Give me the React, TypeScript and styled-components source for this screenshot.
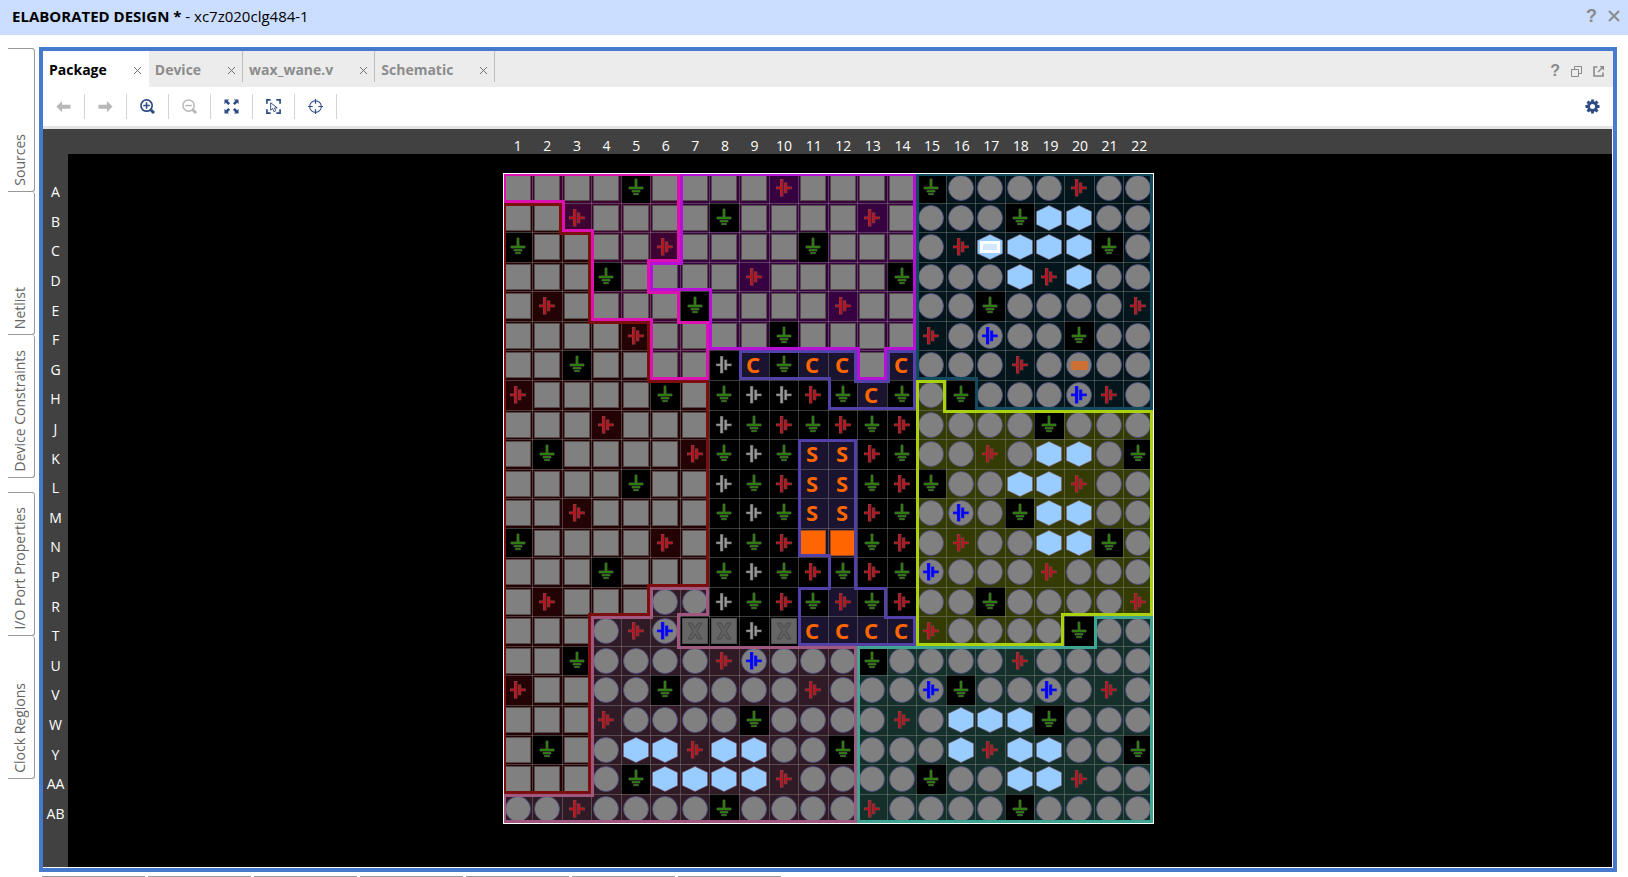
import React from 'react';
import styled, { createGlobalStyle } from 'styled-components';

const GlobalStyle = createGlobalStyle`
  * { box-sizing: border-box; }
  body {
    margin: 0;
    background: #fff;
    color: #000;
    font-family: "Open Sans", "Noto Sans", sans-serif;
    font-size: 14px;
  }
  button {
    margin: 0;
    padding: 0;
    border: 0;
    background: none;
    font: inherit;
    color: inherit;
    cursor: pointer;
  }
  svg { display: block; }
`;

/* ---------- pin map data ---------- */

const ROWS = ['A', 'B', 'C', 'D', 'E', 'F', 'G', 'H', 'J', 'K', 'L', 'M', 'N', 'P', 'R', 'T', 'U', 'V', 'W', 'Y', 'AA', 'AB'];
const COLS = Array.from({ length: 22 }, (_, i) => i + 1);

// I/O bank of every pin; K is a pin outside any bank
const BANKS = [
  'MMMMMMPPPPPPPPTTTTTTTT',
  'RRMMMMPPPPPPPPTTTTTTTT',
  'RRRMMMPPPPPPPPTTTTTTTT',
  'RRRMMPPPPPPPPPTTTTTTTT',
  'RRRMMMKPPPPPPPTTTTTTTT',
  'RRRRRMMPPPPPPPTTTTTTTT',
  'RRRRRMMKIIIIPITTTTTTTT',
  'RRRRRRRKKKKIIIOKTTTTTT',
  'RRRRRRRKKKKKKKOOOOOOOO',
  'RRRRRRRKKKIIKKOOOOOOOO',
  'RRRRRRRKKKIIKKOOOOOOOO',
  'RRRRRRRKKKIIKKOOOOOOOO',
  'RRRRRRRKKKIIKKOOOOOOOO',
  'RRRRRRRKKKKIKKOOOOOOOO',
  'RRRRRVVKKKIIIKOOOOOOOO',
  'RRRVVVKKKKIIIIOOOOOKGG',
  'RRRVVVVVVVVVGGGGGGGGGG',
  'RRRVVVVVVVVVGGGGGGGGGG',
  'RRRVVVVVVVVVGGGGGGGGGG',
  'RRRVVVVVVVVVGGGGGGGGGG',
  'RRRVVVVVVVVVGGGGGGGGGG',
  'VVVVVVVVVVVVGGGGGGGGGG',
];

// s square, c user pin, g ground, p power, w aux power, b bank power, h clock pin,
// H placed clock pin, r placed user pin, x unavailable, o dedicated pin, C config, S system monitor
const PINS = [
  'ssssgsssspssssgccccpcc',
  'sspssssgsssspscccghhcc',
  'gsssspssssgssscpHhhhgc',
  'sssgsssspssssgccchphcc',
  'spssssgsssspssccgccccp',
  'sssspssssgsssspcbccgcc',
  'ssgsssswCgCCsCcccpcrcc',
  'pssssgsgwwpgCgcgcccbpc',
  'ssspssswgpgpgpccccgccc',
  'sgsssspgwgSSpgccpchhcg',
  'ssssgsswgpSSgpgcchhpcc',
  'sspssssgwgSSpgcbcghhcc',
  'gsssspswgpoogpcpcchhgc',
  'sssgsssgwgpgpgbcccpccc',
  'spsssccwgpgpgpccgccccp',
  'ssscpbxxwxCCCCpccccgcc',
  'ssgccccpbcccgccccpcccc',
  'pssccgccccpcccbgccbcpc',
  'ssspccccgccccpchhhgccc',
  'sgschhphhccgccchphhccg',
  'ssscghhhhpccccgcchhpcc',
  'ccpccccgccccpccccgcccc',
];

const BANK_COLORS: Record<string, { fill: string; edge: string }> = {
  M: { fill: '#3f0333', edge: '#dc12b0' },
  P: { fill: '#36023f', edge: '#b80fd6' },
  R: { fill: '#230303', edge: '#7c0e0e' },
  T: { fill: '#04161b', edge: '#124a60' },
  O: { fill: '#353b05', edge: '#aad20f' },
  V: { fill: '#301a26', edge: '#a05880' },
  G: { fill: '#15302a', edge: '#3fa592' },
  I: { fill: '#1a1430', edge: '#5340a8' },
};

const SIZE = 651;
const EDGE = 3;
const PITCH = (SIZE - 1) / 22;
const colX = (k: number) => Math.floor(k * PITCH + 0.1);
const rowY = (k: number) => Math.floor(k * PITCH + 0.7);
const bank = (r: number, c: number) => (BANKS[r] && BANKS[r][c]) || '-';

/* ---------- pin symbols ---------- */

const Ground = () => (
  <path
    d="M-1-9h2v8h6v2H-7v-2h6zM-4 2.500h8v1.500h-8zM-2.500 5.500h5v1.200h-5z"
    fill="#2f7d0c"
    stroke="#4a5546"
    strokeWidth="0.900"
    paintOrder="stroke"
  />
);

const Power = ({ color, halo }: { color: string; halo: string }) => (
  <path
    d="M-7.500-1h4v-7.500h2.300v16.500h-2.300v-7.200h-4zM0.700-5h2v4h4.500v1.800h-4.500v4h-2z"
    fill={color}
    stroke={halo}
    strokeWidth="1.100"
    paintOrder="stroke"
  />
);

const Circle = () => <circle r="12.500" fill="#808080" stroke="#4a4a80" strokeWidth="0.800" />;
const Hexagon = () => <path d="M0-12.500L12.500-6.500V6.500L0 12.500L-12.500 6.500V-6.500z" fill="#99ccff" stroke="#80607c" strokeWidth="0.600" />;

const Letter = ({ children }: { children: string }) => (
  <text textAnchor="middle" x="-1" y="8" fontFamily='"Noto Sans", "Open Sans", sans-serif' fontSize="22" fontWeight="700" fill="#ff6600">
    {children}
  </text>
);

const Pin = ({ kind }: { kind: string }) => {
  switch (kind) {
    case 's':
      return <rect x="-12.500" y="-12.500" width="25" height="25" fill="#808080" stroke="#544848" strokeWidth="1" />;
    case 'c':
      return <Circle />;
    case 'g':
      return <Ground />;
    case 'p':
      return <Power color="#b8141e" halo="#804850" />;
    case 'w':
      return <Power color="#999" halo="#505050" />;
    case 'b':
      return (
        <>
          <Circle />
          <Power color="#0000ff" halo="#1515f0" />
        </>
      );
    case 'h':
      return <Hexagon />;
    case 'H':
      return (
        <>
          <Hexagon />
          <rect x="-8.500" y="-4.500" width="17" height="9" fill="#d3e8ff" stroke="#fff" strokeWidth="3" />
        </>
      );
    case 'r':
      return (
        <>
          <Circle />
          <rect x="-8" y="-4" width="17" height="9" fill="#cc7033" />
        </>
      );
    case 'x':
      return (
        <>
          <rect x="-12.500" y="-12.500" width="25" height="25" fill="#666" stroke="#505050" />
          <path d="M-7-8h4l3 5l3-5h4l-5 8l5 8h-4l-3-5l-3 5h-4l5-8z" fill="#606060" stroke="#4b4b4b" />
        </>
      );
    case 'o':
      return <rect x="-12.500" y="-12.500" width="25" height="25" fill="#ff6600" stroke="#a04818" />;
    default:
      return <Letter>{kind}</Letter>;
  }
};

const BankEdges = ({ r, c }: { r: number; c: number }) => {
  const own = bank(r, c);
  if (own === 'K') return null;
  const x0 = colX(c);
  const y0 = rowY(r);
  const x1 = colX(c + 1);
  const y1 = rowY(r + 1);
  const differs = (dr: number, dc: number) => bank(r + dr, c + dc) !== own;
  const up = differs(-1, 0);
  const down = differs(1, 0);
  const left = differs(0, -1);
  const right = differs(0, 1);
  let d = '';
  if (up) d += `M${x0} ${y0}H${x1}v${EDGE}H${x0}z`;
  if (down) d += `M${x0} ${y1 - EDGE}H${x1}v${EDGE}H${x0}z`;
  if (left) d += `M${x0} ${y0}h${EDGE}V${y1}h-${EDGE}z`;
  if (right) d += `M${x1 - EDGE} ${y0}h${EDGE}V${y1}h-${EDGE}z`;
  [-1, 1].forEach((dr) =>
    [-1, 1].forEach((dc) => {
      const straight = !(dr < 0 ? up : down) && !(dc < 0 ? left : right);
      if (straight && differs(dr, dc)) {
        d += `M${dc < 0 ? x0 : x1 - EDGE} ${dr < 0 ? y0 : y1 - EDGE}h${EDGE}v${EDGE}h-${EDGE}z`;
      }
    }),
  );
  return d ? <path d={d} fill={BANK_COLORS[own].edge} /> : null;
};

const PinMap = () => {
  const cells = ROWS.flatMap((_, r) => COLS.map((__, c) => ({ r, c, key: `${r}-${c}` })));
  return (
    <svg width={SIZE} height={SIZE} viewBox={`0 0 ${SIZE} ${SIZE}`} role="img" aria-label="Package pins">
      <g shapeRendering="crispEdges">
        {cells.map(({ r, c, key }) => {
          const own = bank(r, c);
          const fill = own === 'K' || PINS[r][c] === 'g' ? '#000' : BANK_COLORS[own].fill;
          return <rect key={key} x={colX(c)} y={rowY(r)} width={colX(c + 1) - colX(c)} height={rowY(r + 1) - rowY(r)} fill={fill} />;
        })}
        {COLS.slice(1).map((n) => (
          <path
            key={n}
            d={`M${colX(n - 1)} 0h1v${SIZE}h-1zM0 ${rowY(n - 1)}h${SIZE}v1H0z`}
            fill="#999"
            fillOpacity="0.38"
          />
        ))}
      </g>
      {cells.map(({ r, c, key }) => (
        <g key={key} transform={`translate(${colX(c) + 15} ${rowY(r) + 15})`}>
          <Pin kind={PINS[r][c]} />
        </g>
      ))}
      <g shapeRendering="crispEdges">
        {cells.map(({ r, c, key }) => (
          <BankEdges key={key} r={r} c={c} />
        ))}
        <path d={`M0 0h${SIZE}v${SIZE}H0zM1 1v${SIZE - 2}h${SIZE - 2}V1z`} fill="#fff" />
      </g>
    </svg>
  );
};

/* ---------- window chrome ---------- */

const Page = styled.div`
  min-height: 100vh;
  display: flex;
  flex-direction: column;
`;

const TitleBar = styled.header`
  height: 35px;
  padding: 0 8px 3px 12px;
  display: flex;
  align-items: center;
  justify-content: space-between;
  background: #ccdeff;
`;

const Title = styled.h1`
  margin: 0;
  font-size: 15px;
  line-height: 20px;
  font-weight: 400;
`;

const Actions = styled.div<{ $gap: number }>`
  display: flex;
  align-items: center;
  gap: ${(p) => p.$gap}px;
  color: #8a8a8a;
`;

const HelpButton = styled.button<{ $size: number }>`
  font-family: "Liberation Sans", sans-serif;
  font-size: ${(p) => p.$size}px;
  line-height: 20px;
  font-weight: 700;
`;

const Body = styled.div`
  flex: 1;
  display: flex;
  padding: 12px 11px 4px 0;
`;

const Rail = styled.nav`
  flex: none;
  width: 39px;
  padding: 1px 4px 0 8px;
  display: flex;
  flex-direction: column;
  gap: 14px;
`;

const RailGroup = styled.div`
  display: flex;
  flex-direction: column;
  border-top: 1px solid #999;
  border-radius: 0 3px 0 0;
`;

const RailTab = styled.button`
  height: 143px;
  padding: 5px 0;
  display: flex;
  align-items: flex-end;
  border: solid #999;
  border-width: 0 1px 1px 0;
  border-radius: 0 3px 3px 0;
  color: #666;
`;

const RailLabel = styled.span`
  width: 24px;
  line-height: 24px;
  font-size: 14px;
  white-space: nowrap;
  writing-mode: vertical-rl;
  transform: rotate(180deg);
`;

const Panel = styled.main`
  flex: 1;
  min-width: 0;
  display: flex;
  flex-direction: column;
  border: 4px solid #467acd;
`;

const TabBar = styled.div`
  height: 36px;
  display: flex;
  justify-content: space-between;
  background: #ececec;
`;

const TabList = styled.div`
  display: flex;
`;

const Tab = styled.div<{ $active?: boolean }>`
  height: ${(p) => (p.$active ? 36 : 31)}px;
  padding: ${(p) => (p.$active ? '0 7px 0 6px' : '0 6px')};
  display: flex;
  align-items: flex-start;
  gap: 26px;
  background: ${(p) => (p.$active ? '#fff' : 'transparent')};
  border-right: ${(p) => (p.$active ? '0' : '1px solid #bdbdbd')};
  color: ${(p) => (p.$active ? '#000' : '#8c8c8c')};
`;

const TabName = styled.button`
  font-size: 14px;
  line-height: 38px;
  font-weight: 700;
`;

const TabClose = styled.button`
  height: 38px;
  color: #707070;
`;

const PanelActions = styled(Actions)`
  padding: 4px 9px 0 0;
`;

const Toolbar = styled.div`
  height: 42px;
  display: flex;
  align-items: center;
  border-bottom: 3px solid #e4e4e4;
`;

const Tool = styled.button<{ $off?: boolean }>`
  width: 42px;
  height: 25px;
  display: flex;
  align-items: center;
  justify-content: center;
  border-right: 1px solid #d4d4d4;
  color: ${(p) => (p.$off ? '#b8b8b8' : '#2f4d85')};
`;

const Settings = styled.button`
  margin: 0 13px 0 auto;
  color: #2f4d85;
`;

const Viewer = styled.section`
  flex: 1;
  display: grid;
  grid-template: 25px 1fr / 25px 1fr;
  margin: 0 1px 1px 0;
  background: #414141;
  color: #fff;
`;

const ColumnRuler = styled.div`
  grid-column: 2;
  display: flex;
  justify-content: center;
  padding-right: 23px;
`;

const ColumnLabels = styled.div`
  width: 651px;
  display: grid;
  grid-template-columns: repeat(22, 1fr);
  line-height: 33px;
  text-align: center;
`;

const RowRuler = styled.div`
  padding-top: 23px;
`;

const RowLabels = styled.div`
  height: 651px;
  display: grid;
  grid-template-rows: repeat(22, 1fr);
  align-items: center;
  justify-items: center;
`;

const Stage = styled.div`
  display: flex;
  justify-content: center;
  padding: 19px 23px 19px 0;
  background: #000;
`;

const Dock = styled.footer`
  display: flex;
  gap: 3px;
  padding-left: 42px;
`;

const DockTab = styled.div`
  width: 103px;
  height: 1px;
  background: #999;
`;

/* ---------- icons ---------- */

const Icon = ({ size = 15, children }: { size?: number; children: React.ReactNode }) => (
  <svg width={size} height={size} viewBox="0 0 16 16" fill="none" stroke="currentColor" aria-hidden="true">
    {children}
  </svg>
);

const Cross = ({ size, weight }: { size: number; weight: number }) => (
  <svg width={size} height={size} viewBox={`0 0 ${size} ${size}`} stroke="currentColor" strokeWidth={weight} aria-hidden="true">
    <path d={`M1 1L${size - 1} ${size - 1}M${size - 1} 1L1 ${size - 1}`} />
  </svg>
);

const ArrowLeft = <path d="M0.500 8L6.500 2v4H15.500v4.500H6.500V14z" fill="currentColor" stroke="none" />;
const ArrowRight = <path d="M15.500 8L9.500 2v4H0.500v4.500H9.500V14z" fill="currentColor" stroke="none" />;
const ZoomIn = (
  <>
    <circle cx="7" cy="7" r="6" strokeWidth="1.800" />
    <path d="M3.500 7h7M7 3.500v7" strokeWidth="1.600" />
    <path d="M11.500 11.500l3.500 3.500" strokeWidth="3.200" />
  </>
);
const ZoomOut = (
  <>
    <circle cx="7" cy="7" r="6" strokeWidth="1.600" />
    <path d="M3.500 7h7" strokeWidth="1.600" />
    <path d="M11.500 11.500l3.500 3.500" strokeWidth="3" />
  </>
);
const Fit = (
  <path
    d="M0.500 0.500h5l-1.500 1.500l2.500 2.500l-2 2l-2.500-2.500l-1.500 1.500zM15.500 0.500v5l-1.500-1.500l-2.500 2.500l-2-2l2.500-2.500l-1.500-1.500zM0.500 15.500v-5l1.500 1.500l2.500-2.500l2 2l-2.500 2.500l1.500 1.500zM15.500 15.500h-5l1.500-1.500l-2.500-2.500l2-2l2.500 2.500l1.500-1.500z"
    fill="currentColor"
    stroke="none"
  />
);
const SelectArea = (
  <>
    <path d="M1 5V1h4M11 1h4v4M15 11v4h-4M5 15H1v-4" strokeWidth="1.800" />
    <path d="M5 4v8l2-2l1.500 3.500l2-1l-1.500-3h3z" strokeWidth="1" />
  </>
);
const Target = (
  <>
    <circle cx="8" cy="8" r="6.200" strokeWidth="1.100" />
    <path d="M8 0v5M8 11v5M0 8h5M11 8h5" strokeWidth="1.300" />
  </>
);
const Gear = (
  <path
    fill="currentColor"
    stroke="none"
    fillRule="evenodd"
    d="M6.500 0.500h3v2l1.200.5l1.600-1.400l2.100 2.100L13 5.300l.5 1.200h2v3h-2L13 10.700l1.400 1.600l-2.100 2.100l-1.600-1.400l-1.200.5v2h-3v-2L5.300 13l-1.600 1.400l-2.100-2.100L3 10.700l-.5-1.200h-2v-3h2L3 5.300L1.600 3.700l2.100-2.100L5.300 3l1.200-.5zM8 5.300a2.700 2.700 0 1 0 0 5.400a2.700 2.700 0 1 0 0-5.400z"
  />
);

const TOOLS = [
  { name: 'Back', icon: ArrowLeft, off: true },
  { name: 'Forward', icon: ArrowRight, off: true },
  { name: 'Zoom in', icon: ZoomIn },
  { name: 'Zoom out', icon: ZoomOut, off: true },
  { name: 'Zoom fit', icon: Fit },
  { name: 'Select area', icon: SelectArea },
  { name: 'Autofit selection', icon: Target },
];

const RAIL = [
  ['Sources', 'Netlist', 'Device Constraints'],
  ['I/O Port Properties', 'Clock Regions'],
];

export default function App() {
  return (
    <Page>
      <GlobalStyle />
      <TitleBar>
        <Title>
          <b>ELABORATED DESIGN *</b> - xc7z020clg484-1
        </Title>
        <Actions $gap={11}>
          <HelpButton $size={18} aria-label="Help">?</HelpButton>
          <button aria-label="Close design">
            <Cross size={12} weight={2} />
          </button>
        </Actions>
      </TitleBar>
      <Body>
        <Rail>
          {RAIL.map((group) => (
            <RailGroup key={group[0]}>
              {group.map((name) => (
                <RailTab key={name}>
                  <RailLabel>{name}</RailLabel>
                </RailTab>
              ))}
            </RailGroup>
          ))}
        </Rail>
        <Panel>
          <TabBar>
            <TabList>
              {['Package', 'Device', 'wax_wane.v', 'Schematic'].map((name, i) => (
                <Tab key={name} $active={i === 0}>
                  <TabName>{name}</TabName>
                  <TabClose aria-label={`Close ${name}`}>
                    <Cross size={9} weight={1} />
                  </TabClose>
                </Tab>
              ))}
            </TabList>
            <PanelActions $gap={11}>
              <HelpButton $size={16} aria-label="Panel help">?</HelpButton>
              <button aria-label="Restore">
                <svg width="11" height="11" viewBox="0 0 11 11" fill="none" stroke="currentColor">
                  <path d="M3.500 3.500v-3h7v7h-3M0.500 3.500h7v7h-7z" />
                </svg>
              </button>
              <button aria-label="Float">
                <svg width="11" height="11" viewBox="0 0 11 11" fill="none" stroke="currentColor">
                  <path d="M4.500 1H1v9h9V6.500" strokeWidth="1.600" />
                  <path d="M5 6L9.500 1.500" strokeWidth="1.400" />
                  <path d="M6.500 0H11v4.500z" fill="currentColor" stroke="none" />
                </svg>
              </button>
            </PanelActions>
          </TabBar>
          <Toolbar>
            {TOOLS.map((tool) => (
              <Tool key={tool.name} $off={tool.off} aria-label={tool.name}>
                <Icon>{tool.icon}</Icon>
              </Tool>
            ))}
            <Settings aria-label="Settings">
              <Icon>{Gear}</Icon>
            </Settings>
          </Toolbar>
          <Viewer>
            <ColumnRuler>
              <ColumnLabels>
                {COLS.map((n) => (
                  <span key={n}>{n}</span>
                ))}
              </ColumnLabels>
            </ColumnRuler>
            <RowRuler>
              <RowLabels>
                {ROWS.map((name) => (
                  <span key={name}>{name}</span>
                ))}
              </RowLabels>
            </RowRuler>
            <Stage>
              <PinMap />
            </Stage>
          </Viewer>
        </Panel>
      </Body>
      <Dock>
        {Array.from({ length: 7 }, (_, i) => (
          <DockTab key={i} />
        ))}
      </Dock>
    </Page>
  );
}
